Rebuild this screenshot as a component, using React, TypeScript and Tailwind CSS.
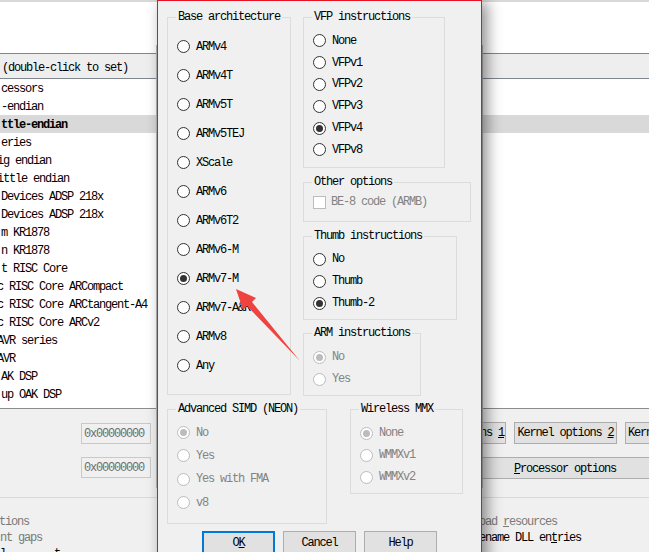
import React from 'react';

// ─── Shared bits ───────────────────────────────────────────────

const MONO = 'font-mono text-[12px] tracking-[-1.2px]';

function Radio({ on, off }: { on?: boolean; off?: boolean }) {
  return (
    <span
      className={`w-[13px] h-[13px] rounded-full border bg-white flex items-center justify-center flex-shrink-0 ${
        off ? 'border-[#bcbcbc]' : 'border-[#333333]'
      }`}
    >
      {on && <span className={`w-[7px] h-[7px] rounded-full ${off ? 'bg-[#bcbcbc]' : 'bg-[#333333]'}`} />}
    </span>
  );
}

function Option({ label, on, off, h }: { label: string; on?: boolean; off?: boolean; h: string }) {
  return (
    <div className={`flex items-center gap-[6px] ${h}`}>
      <Radio on={on} off={off} />
      <span className={`whitespace-pre leading-[14px] ${off ? 'text-[#838383]' : 'text-black'}`}>{label}</span>
    </div>
  );
}

function Group({ title, className, children }: { title: string; className: string; children?: React.ReactNode }) {
  return (
    <fieldset className={`border border-[#dcdcdc] ${className}`}>
      <legend className="ml-[8px] px-[2px] leading-[14px] text-black whitespace-pre">{title}</legend>
      {children}
    </fieldset>
  );
}

// ─── Background window ─────────────────────────────────────────

const rows: { t: string; bold?: boolean; shift?: boolean }[] = [
  { t: 'cessors' },
  { t: '-endian' },
  { t: 'ttle-endian', bold: true },
  { t: 'eries' },
  { t: 'ig endian', shift: true },
  { t: 'ittle endian', shift: true },
  { t: 'Devices ADSP 218x' },
  { t: 'Devices ADSP 218x' },
  { t: 'm KR1878' },
  { t: 'n KR1878' },
  { t: 't RISC Core' },
  { t: 'c RISC Core ARCompact', shift: true },
  { t: 'c RISC Core ARCtangent-A4', shift: true },
  { t: 'c RISC Core ARCv2', shift: true },
  { t: 'AVR series', shift: true },
  { t: 'AVR', shift: true },
  { t: 'AK DSP' },
  { t: 'up OAK DSP' },
  { t: '.' },
];

function Background() {
  return (
    <div className="flex flex-col">
      <div className="h-[2px] bg-[#d9d9d9]" />
      <div className="h-[51px] bg-white" />
      <div className="h-[26px] border-y border-[#80868e] bg-[#eeeeee] flex items-center pl-[2px] pt-[3px] whitespace-pre">
        (double-click to set)
      </div>
      <div className="h-[330px] border-b border-[#8c8c8c] bg-white overflow-hidden">
        {rows.map((r, i) => (
          <div
            key={i}
            className={`h-[18px] flex items-center whitespace-pre pl-[1px] pt-[2px] ${r.bold ? 'bg-[#d9d9d9] font-bold' : ''}`}
          >
            <span className={r.shift ? '-ml-[4px]' : ''}>{r.t}</span>
          </div>
        ))}
      </div>

      {/* Lower panel */}
      <div className="pt-[13px]">
        <div className="flex items-start h-[22px]">
          <div className="ml-[81px] mt-[1px] w-[70px] h-[21px] border border-[#c9c9c9] flex items-center pl-[2px] text-[#6d6d6d] flex-shrink-0">
            0x00000000
          </div>
          <div className="ml-[255px] w-[100px] h-[22px] border border-[#adadad] bg-[#e1e1e1] flex items-center justify-center whitespace-pre flex-shrink-0">
            Kernel options <span className="underline">1</span>
          </div>
          <div className="ml-[8px] w-[103px] h-[22px] border border-[#adadad] bg-[#e1e1e1] flex items-center justify-center whitespace-pre flex-shrink-0">
            Kernel options <span className="underline">2</span>
          </div>
          <div className="ml-[8px] w-[103px] h-[22px] border border-[#adadad] bg-[#e1e1e1] flex items-center pl-[2px] whitespace-pre flex-shrink-0">
            Kernel options 3
          </div>
        </div>
        <div className="flex items-start h-[22px] mt-[13px]">
          <div className="ml-[81px] w-[70px] h-[21px] border border-[#c9c9c9] flex items-center pl-[2px] text-[#6d6d6d] flex-shrink-0">
            0x00000000
          </div>
          <div className="ml-[255px] w-[330px] h-[22px] border border-[#adadad] bg-[#e1e1e1] flex items-center pl-[107px] pt-[1px] whitespace-pre flex-shrink-0">
            <span className="underline">P</span>rocessor options
          </div>
        </div>
        <div className="mt-[18px] h-px bg-[#d9d9d9]" />
        <div className="mt-[16px] flex">
          <div className="w-[481px] flex flex-col">
            <div className="h-[16px] flex items-center whitespace-pre text-[#7a7a7a] -ml-[1px]">tions</div>
            <div className="h-[16px] flex items-center whitespace-pre text-[#7a7a7a]">nt gaps</div>
            <div className="h-[16px] flex items-center whitespace-pre">l        t</div>
          </div>
          <div className="flex flex-col">
            <div className="h-[16px] flex items-center whitespace-pre text-[#7a7a7a] -ml-[2px]">
              oad <span className="underline">r</span>esources
            </div>
            <div className="h-[16px] flex items-center whitespace-pre -ml-[2px]">
              ename DLL en<span className="underline">t</span>ries
            </div>
          </div>
        </div>
      </div>
    </div>
  );
}

// ─── ARM options dialog ────────────────────────────────────────

function Dialog() {
  return (
    <div className="absolute left-[157px] top-0 w-[325px] h-[570px] border border-[#e81123] bg-[#f0f0f0] shadow-[5px_2px_14px_rgba(0,0,0,0.45)] pl-[9px] pt-[9px]">
      <div className="flex items-start gap-[12px]">
        <Group title="Base architecture" className="w-[124px] h-[385px]">
          <div className="pl-[9px] pt-[8px]">
            {['ARMv4', 'ARMv4T', 'ARMv5T', 'ARMv5TEJ', 'XScale', 'ARMv6', 'ARMv6T2', 'ARMv6-M', 'ARMv7-M', 'ARMv7-A&R', 'ARMv8', 'Any'].map(
              (l) => (
                <Option key={l} label={l} on={l === 'ARMv7-M'} h="h-[29px]" />
              )
            )}
          </div>
        </Group>

        <div className="flex flex-col items-start">
          <Group title="VFP instructions" className="w-[142px] h-[158px]">
            <div className="pl-[9px] pt-[6px]">
              {['None', 'VFPv1', 'VFPv2', 'VFPv3', 'VFPv4', 'VFPv8'].map((l) => (
                <Option key={l} label={l} on={l === 'VFPv4'} h="h-[21.8px]" />
              ))}
            </div>
          </Group>
          <Group title="Other options" className="mt-[7px] w-[168px] h-[47px]">
            <div className="pl-[9px] pt-[4px] h-[22px] flex items-center gap-[5px]">
              <span className="w-[13px] h-[13px] border border-[#bcbcbc] bg-white flex-shrink-0" />
              <span className="text-[#838383] whitespace-pre">BE-8 code (ARMB)</span>
            </div>
          </Group>
          <Group title="Thumb instructions" className="mt-[7px] w-[154px] h-[91px]">
            <div className="pl-[9px] pt-[5px]">
              {['No', 'Thumb', 'Thumb-2'].map((l) => (
                <Option key={l} label={l} on={l === 'Thumb-2'} h="h-[22px]" />
              ))}
            </div>
          </Group>
          <Group title="ARM instructions" className="mt-[6px] w-[118px] h-[70px]">
            <div className="pl-[9px] pt-[6px]">
              <Option label="No" on off h="h-[22px]" />
              <Option label="Yes" off h="h-[22px]" />
            </div>
          </Group>
        </div>
      </div>

      <div className="mt-[6px] flex items-start">
        <Group title="Advanced SIMD (NEON)" className="w-[160px] h-[122px]">
          <div className="pl-[9px] pt-[5px]">
            <Option label="No" on off h="h-[23.3px]" />
            <Option label="Yes" off h="h-[23.3px]" />
            <Option label="Yes with FMA" off h="h-[23.3px]" />
            <Option label="v8" off h="h-[23.3px]" />
          </div>
        </Group>
        <Group title="Wireless MMX" className="ml-[23px] w-[113px] h-[92px]">
          <div className="pl-[9px] pt-[6px]">
            <Option label="None" on off h="h-[22px]" />
            <Option label="WMMXv1" off h="h-[22px]" />
            <Option label="WMMXv2" off h="h-[22px]" />
          </div>
        </Group>
      </div>

      <div className="mt-[7px] ml-[35px] flex gap-[8px]">
        <div className="w-[73px] h-[23px] border-2 border-[#0078d7] bg-[#e1e1e1] flex items-center justify-center">
          O<span className="underline">K</span>
        </div>
        <div className="w-[73px] h-[23px] border border-[#adadad] bg-[#e1e1e1] flex items-center justify-center">
          Cancel
        </div>
        <div className="w-[73px] h-[23px] border border-[#adadad] bg-[#e1e1e1] flex items-center justify-center">
          Help
        </div>
      </div>
    </div>
  );
}

// ─── Page ──────────────────────────────────────────────────────

export default function App() {
  return (
    <div className={`relative w-[649px] h-[552px] overflow-hidden bg-[#f0f0f0] text-black ${MONO}`}>
      <Background />

      {/* frame of the window behind the dialog */}
      <div className="absolute left-[156px] top-[45px] w-[327px] h-[443px] border border-[#b9b9b9]" />

      <Dialog />

      {/* red annotation arrow */}
      <svg className="absolute left-0 top-0 pointer-events-none" width="649" height="552" viewBox="0 0 649 552">
        <polygon points="236,289 256,298 252,302 300,361 247,306 243,310" fill="#f0433f" />
      </svg>
    </div>
  );
}
